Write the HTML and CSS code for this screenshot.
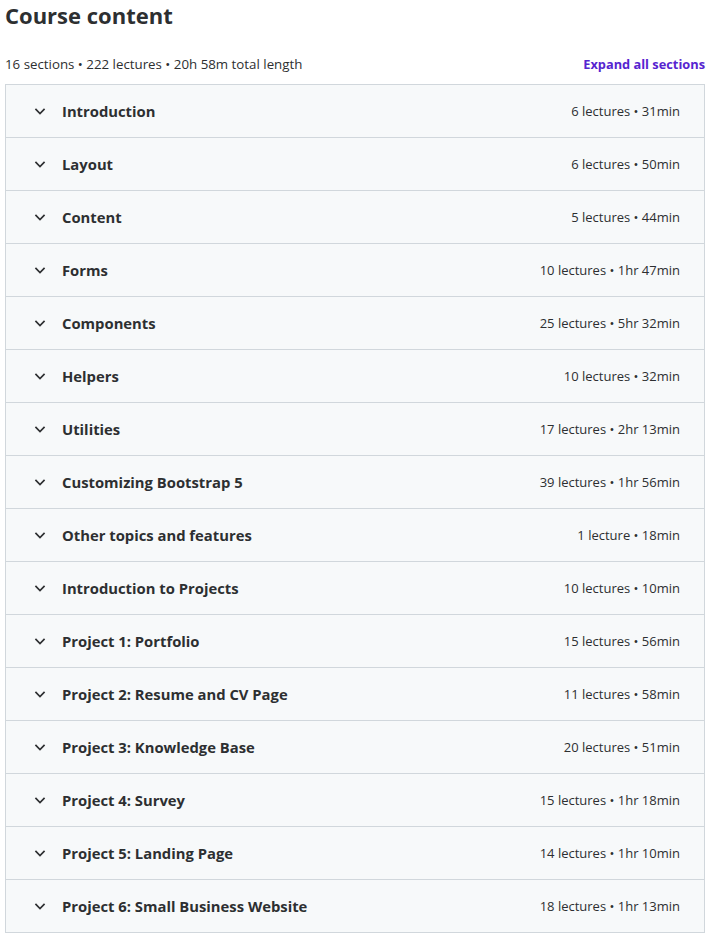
FILE: index.html
```html
<!DOCTYPE html>
<html>
<head>
	<meta charset="utf-8">
	<title>Course content</title>
	<link rel="stylesheet" href="styles.css">
</head>
<body>
	<div class="curriculum">
		<h2 class="heading">Course content</h2>

		<div class="summary">
			<span>16 sections &bull; 222 lectures &bull; 20h 58m total length</span>
			<a class="expand" href="#">Expand all sections</a>
		</div>

		<div class="sections">
			<div class="section"><span class="chev"><svg viewBox="0 0 24 24"><path d="M6.5 9.5 12 15l5.5-5.5"/></svg></span><span class="title">Introduction</span><span class="meta">6 lectures &bull; 31min</span></div>
			<div class="section"><span class="chev"><svg viewBox="0 0 24 24"><path d="M6.5 9.5 12 15l5.5-5.5"/></svg></span><span class="title">Layout</span><span class="meta">6 lectures &bull; 50min</span></div>
			<div class="section"><span class="chev"><svg viewBox="0 0 24 24"><path d="M6.5 9.5 12 15l5.5-5.5"/></svg></span><span class="title">Content</span><span class="meta">5 lectures &bull; 44min</span></div>
			<div class="section"><span class="chev"><svg viewBox="0 0 24 24"><path d="M6.5 9.5 12 15l5.5-5.5"/></svg></span><span class="title">Forms</span><span class="meta">10 lectures &bull; 1hr 47min</span></div>
			<div class="section"><span class="chev"><svg viewBox="0 0 24 24"><path d="M6.5 9.5 12 15l5.5-5.5"/></svg></span><span class="title">Components</span><span class="meta">25 lectures &bull; 5hr 32min</span></div>
			<div class="section"><span class="chev"><svg viewBox="0 0 24 24"><path d="M6.5 9.5 12 15l5.5-5.5"/></svg></span><span class="title">Helpers</span><span class="meta">10 lectures &bull; 32min</span></div>
			<div class="section"><span class="chev"><svg viewBox="0 0 24 24"><path d="M6.5 9.5 12 15l5.5-5.5"/></svg></span><span class="title">Utilities</span><span class="meta">17 lectures &bull; 2hr 13min</span></div>
			<div class="section"><span class="chev"><svg viewBox="0 0 24 24"><path d="M6.5 9.5 12 15l5.5-5.5"/></svg></span><span class="title">Customizing Bootstrap 5</span><span class="meta">39 lectures &bull; 1hr 56min</span></div>
			<div class="section"><span class="chev"><svg viewBox="0 0 24 24"><path d="M6.5 9.5 12 15l5.5-5.5"/></svg></span><span class="title">Other topics and features</span><span class="meta">1 lecture &bull; 18min</span></div>
			<div class="section"><span class="chev"><svg viewBox="0 0 24 24"><path d="M6.5 9.5 12 15l5.5-5.5"/></svg></span><span class="title">Introduction to Projects</span><span class="meta">10 lectures &bull; 10min</span></div>
			<div class="section"><span class="chev"><svg viewBox="0 0 24 24"><path d="M6.5 9.5 12 15l5.5-5.5"/></svg></span><span class="title">Project 1: Portfolio</span><span class="meta">15 lectures &bull; 56min</span></div>
			<div class="section"><span class="chev"><svg viewBox="0 0 24 24"><path d="M6.5 9.5 12 15l5.5-5.5"/></svg></span><span class="title">Project 2: Resume and CV Page</span><span class="meta">11 lectures &bull; 58min</span></div>
			<div class="section"><span class="chev"><svg viewBox="0 0 24 24"><path d="M6.5 9.5 12 15l5.5-5.5"/></svg></span><span class="title">Project 3: Knowledge Base</span><span class="meta">20 lectures &bull; 51min</span></div>
			<div class="section"><span class="chev"><svg viewBox="0 0 24 24"><path d="M6.5 9.5 12 15l5.5-5.5"/></svg></span><span class="title">Project 4: Survey</span><span class="meta">15 lectures &bull; 1hr 18min</span></div>
			<div class="section"><span class="chev"><svg viewBox="0 0 24 24"><path d="M6.5 9.5 12 15l5.5-5.5"/></svg></span><span class="title">Project 5: Landing Page</span><span class="meta">14 lectures &bull; 1hr 10min</span></div>
			<div class="section"><span class="chev"><svg viewBox="0 0 24 24"><path d="M6.5 9.5 12 15l5.5-5.5"/></svg></span><span class="title">Project 6: Small Business Website</span><span class="meta">18 lectures &bull; 1hr 13min</span></div>
		</div>
	</div>
</body>
</html>
```

FILE: styles.css
```css
body
{
	margin: 0;
	padding: 0 5px;
	background: #fff;
	color: #2d2f31;
	font-family: "Open Sans", "Noto Sans", sans-serif;
}

.curriculum
{
	width: 700px;
}

.heading
{
	margin: 0;
	font-size: 22px;
	line-height: 30px;
	font-weight: 700;
	color: #2d2f31;
}

/* stats line and the expand link */
.summary
{
	display: flex;
	justify-content: space-between;
	align-items: center;
	margin-top: 22px;
	padding-bottom: 8px;
	line-height: 24px;
	font-size: 13.3px;
}

.expand
{
	color: #5624d0;
	font-weight: 700;
	font-size: 12.8px;
	text-decoration: none;
}

.sections
{
	border: 1px solid #d1d7dc;
	border-bottom: 0;
}

.section
{
	display: flex;
	align-items: center;
	height: 52px;
	padding: 0 24px 0 24px;
	background: #f7f9fa;
	border-bottom: 1px solid #d1d7dc;
}

.chev
{
	display: flex;
	width: 20px;
	height: 20px;
	margin-right: 12px;
}

.chev svg
{
	width: 20px;
	height: 20px;
	fill: none;
	stroke: #2d2f31;
	stroke-width: 2;
}

.title
{
	flex: 1;
	font-size: 14.8px;
	font-weight: 700;
}

.meta
{
	font-size: 13px;
	color: #2d2f31;
}
```
